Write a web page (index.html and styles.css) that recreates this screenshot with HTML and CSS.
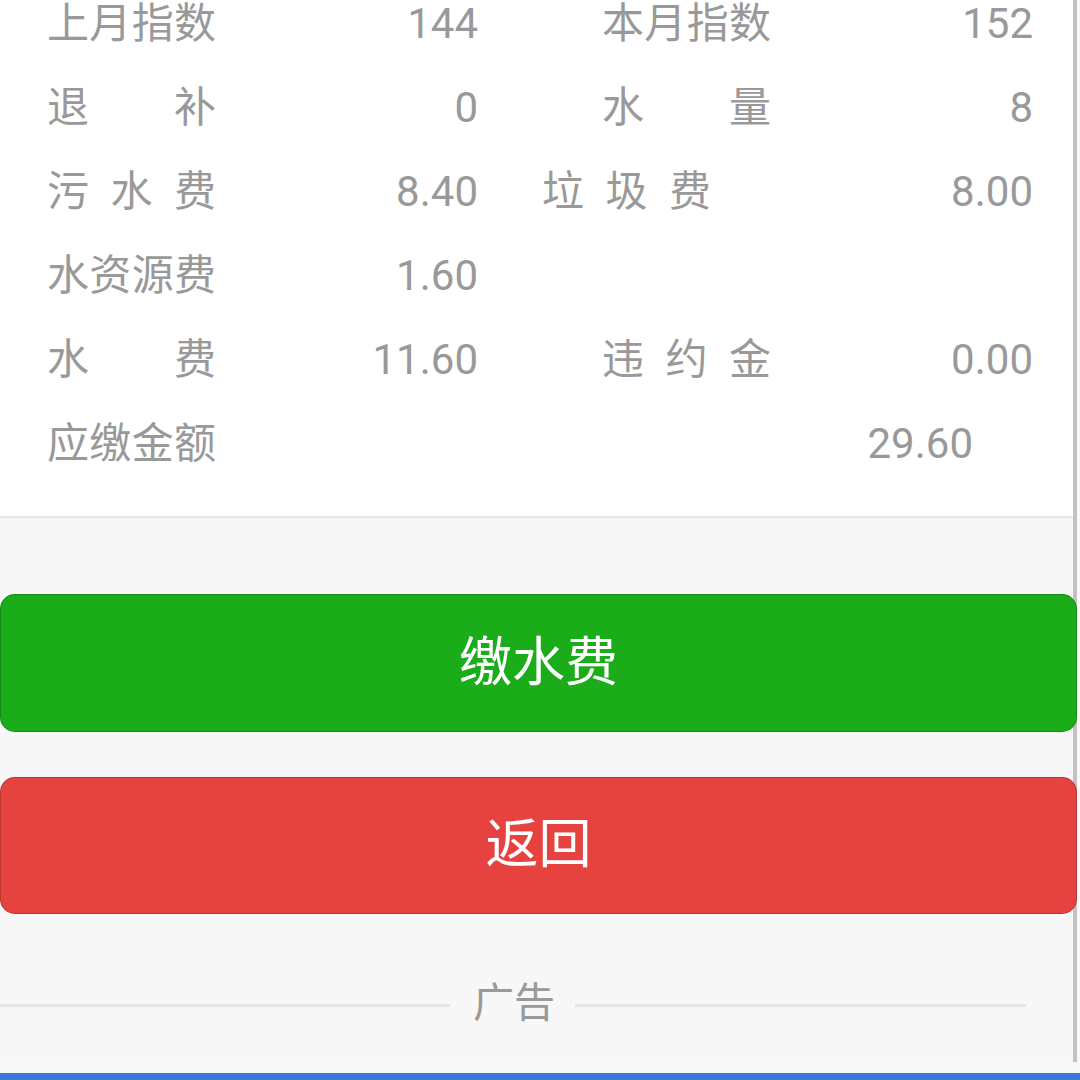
FILE: index.html
```html
<!DOCTYPE html>
<html lang="zh-CN">
<head>
  <meta charset="UTF-8" />
  <meta name="viewport" content="width=device-width, initial-scale=1.0"/>
  <title>缴水费</title>
  <link rel="stylesheet" href="styles.css">
</head>
<body>

  <div class="page">
    <div class="bill">
      <div class="bill-row">
        <div class="pair"><span class="label">上月指数</span><span class="value">144</span></div>
        <div class="pair"><span class="label">本月指数</span><span class="value">152</span></div>
      </div>
      <div class="bill-row">
        <div class="pair"><span class="label">退补</span><span class="value">0</span></div>
        <div class="pair"><span class="label">水量</span><span class="value">8</span></div>
      </div>
      <div class="bill-row">
        <div class="pair"><span class="label">污水费</span><span class="value">8.40</span></div>
        <div class="pair"><span class="label label-shift">垃圾费</span><span class="value">8.00</span></div>
      </div>
      <div class="bill-row">
        <div class="pair"><span class="label">水资源费</span><span class="value">1.60</span></div>
      </div>
      <div class="bill-row">
        <div class="pair"><span class="label">水费</span><span class="value">11.60</span></div>
        <div class="pair"><span class="label">违约金</span><span class="value">0.00</span></div>
      </div>
      <div class="bill-row total">
        <span class="label">应缴金额</span><span class="value">29.60</span>
      </div>
    </div>

    <div class="actions">
      <button class="btn btn-primary">缴水费</button>
      <button class="btn btn-warn">返回</button>
    </div>

    <div class="ad-divider">
      <span class="line line-left"></span>
      <span class="ad-text">广告</span>
      <span class="line line-right"></span>
    </div>
  </div>

  <div class="bottom-bar"></div>

</body>
</html>
```

FILE: styles.css
```css
body {
  font-family: Roboto, "Noto Sans CJK SC", sans-serif;
  background: #f8f8f8;
  margin: 0;
  padding: 0;
  overflow: hidden;
  height: 1080px;
}

.page {
  width: 1073px;
  min-height: 1080px;
  border-right: 4px solid #c2c2c2;
  background: #f7f7f7;
}

.bill {
  background: white;
  margin-top: -18px;
  padding: 0 40px 30px 47px;
  border-bottom: 2px solid #e6e6e6;
  color: #999;
  font-size: 42px;
}

.bill-row {
  display: flex;
  gap: 124px;
  height: 84px;
  line-height: 84px;
}

.pair {
  display: flex;
  width: 431px;
}

.label {
  width: 169px;
  flex-shrink: 0;
  text-align: justify;
  text-align-last: justify;
}

.label-shift {
  margin-left: -60px;
}

.value {
  flex: 1;
  text-align: right;
}

.total .value {
  margin-right: 60px;
}

.actions {
  padding-top: 76px;
}

.btn {
  display: block;
  width: 1077px;
  height: 138px;
  margin: 0 0 45px 0;
  border: 1px solid rgba(0,0,0,0.2);
  border-radius: 15px;
  color: white;
  font-family: Roboto, "Noto Sans CJK SC", sans-serif;
  font-size: 53px;
  line-height: 136px;
  padding: 0;
  position: relative;
}

.btn-primary {
  background-color: #1aad19;
}

.btn-warn {
  background-color: #e64340;
  height: 137px;
  line-height: 135px;
  margin-bottom: 40px;
}

.ad-divider {
  display: flex;
  align-items: center;
  width: 1026px;
  height: 90px;
}

.line {
  height: 3px;
  background: #e5e5e5;
  margin-top: 12px;
}

.line-left {
  width: 450px;
}

.line-right {
  flex: 1;
}

.ad-text {
  padding: 0 20px 0 23px;
  color: #999;
  font-size: 41px;
}

.bottom-bar {
  position: fixed;
  left: 0;
  right: 0;
  bottom: 0;
  height: 7px;
  background: #3a77d8;
}
```
